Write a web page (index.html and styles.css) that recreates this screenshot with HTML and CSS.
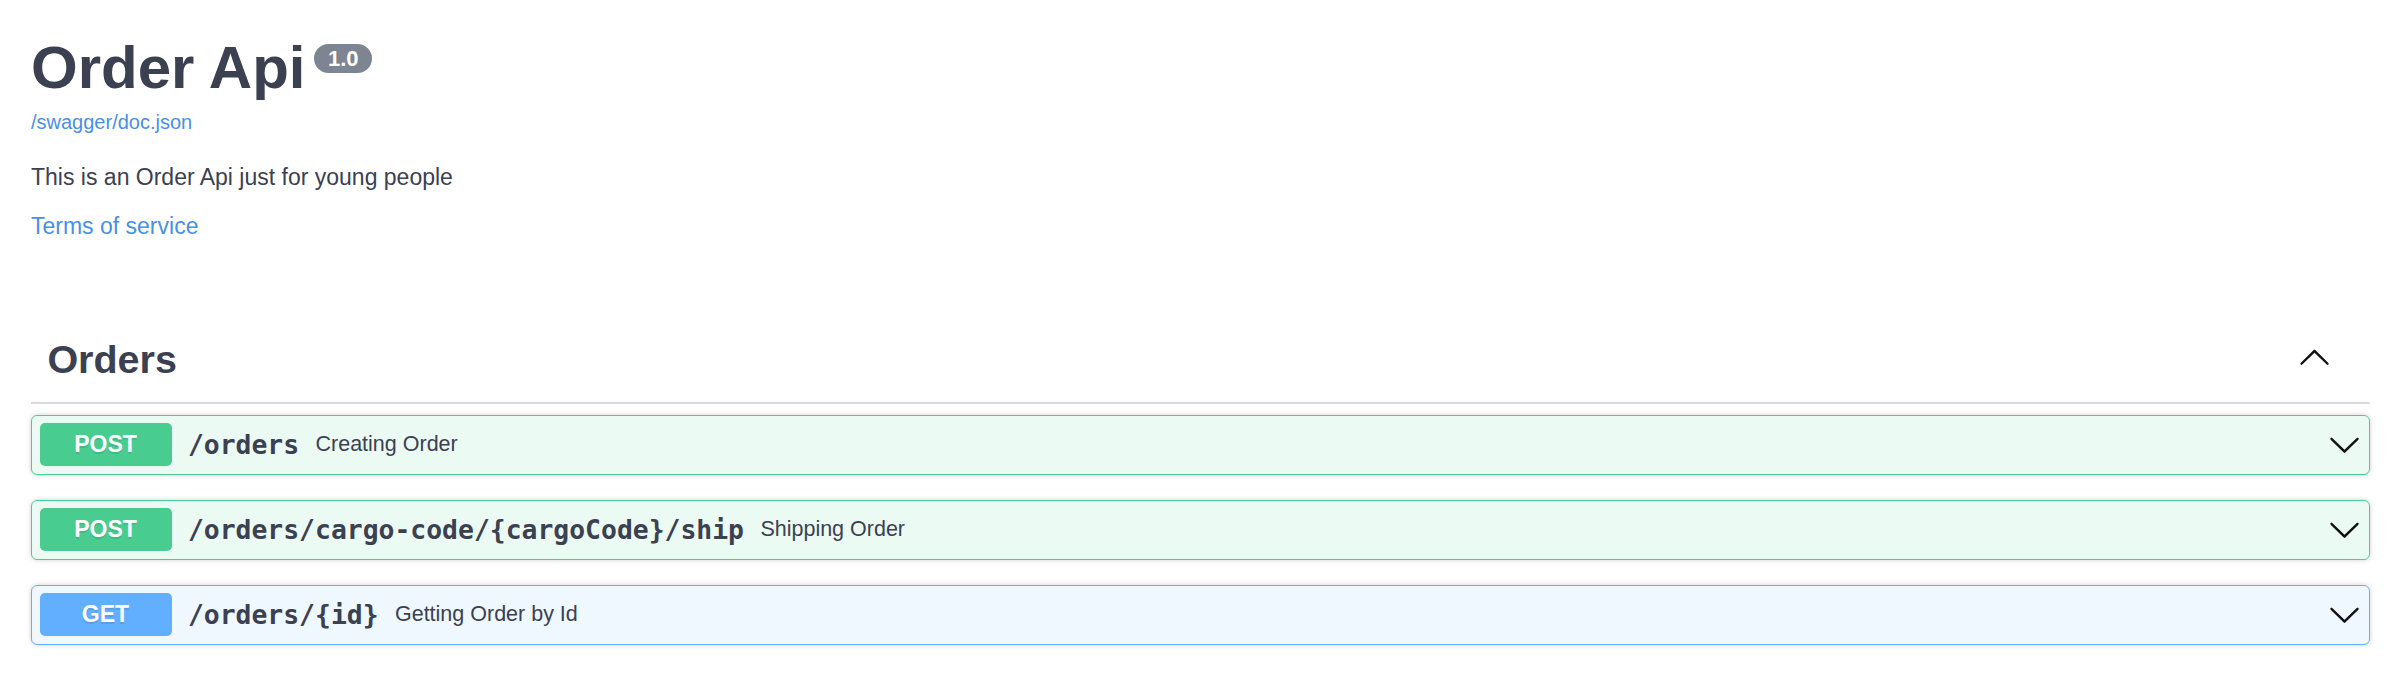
FILE: index.html
```html
<!DOCTYPE html>
<html lang="en">
<head>
<meta charset="utf-8">
<title>Order Api</title>
<link rel="stylesheet" href="styles.css">
</head>
<body>
<div class="wrapper">
  <section class="info">
    <h1 class="title"><span class="title-text">Order Api</span><small class="version"><span>1.0</span></small></h1>
    <div class="base-url"><a class="link" href="#">/swagger/doc.json</a></div>
    <p class="description">This is an Order Api just for young people</p>
    <div class="tos"><a class="link tos-link" href="#">Terms of service</a></div>
  </section>

  <section class="tag-section">
    <h3 class="opblock-tag">
      <span class="tag-name">Orders</span>
      <button class="expand" aria-label="collapse">
        <svg class="arrow" viewBox="0 0 20 20" width="33" height="33"><path d="M17.418 14.908c.272.268.709.268.979 0s.271-.701 0-.969l-7.908-7.83c-.27-.268-.707-.268-.979 0l-7.908 7.83c-.27.268-.27.701 0 .969.271.268.709.268.979 0L10 7.767l7.418 7.141z"/></svg>
      </button>
    </h3>

    <div class="opblock opblock-post">
      <div class="summary">
        <span class="method method-post">POST</span>
        <span class="path">/orders</span>
        <span class="summary-desc">Creating Order</span>
        <svg class="arrow" viewBox="0 0 20 20" width="33" height="33"><path d="M17.418 6.109c.272-.268.709-.268.979 0s.271.701 0 .969l-7.908 7.83c-.27.268-.707.268-.979 0l-7.908-7.83c-.27-.268-.27-.701 0-.969.271-.268.709-.268.979 0L10 13.25l7.418-7.141z"/></svg>
      </div>
    </div>

    <div class="opblock opblock-post">
      <div class="summary">
        <span class="method method-post">POST</span>
        <span class="path">/orders/cargo-code/{cargoCode}/ship</span>
        <span class="summary-desc">Shipping Order</span>
        <svg class="arrow" viewBox="0 0 20 20" width="33" height="33"><path d="M17.418 6.109c.272-.268.709-.268.979 0s.271.701 0 .969l-7.908 7.83c-.27.268-.707.268-.979 0l-7.908-7.83c-.27-.268-.27-.701 0-.969.271-.268.709-.268.979 0L10 13.25l7.418-7.141z"/></svg>
      </div>
    </div>

    <div class="opblock opblock-get">
      <div class="summary">
        <span class="method method-get">GET</span>
        <span class="path">/orders/{id}</span>
        <span class="summary-desc">Getting Order by Id</span>
        <svg class="arrow" viewBox="0 0 20 20" width="33" height="33"><path d="M17.418 6.109c.272-.268.709-.268.979 0s.271.701 0 .969l-7.908 7.83c-.27.268-.707.268-.979 0l-7.908-7.83c-.27-.268-.27-.701 0-.969.271-.268.709-.268.979 0L10 13.25l7.418-7.141z"/></svg>
      </div>
    </div>
  </section>
</div>
</body>
</html>
```

FILE: styles.css
```css
* { box-sizing: border-box; }

html, body {
  margin: 0;
  padding: 0;
  background: #ffffff;
}

body {
  font-family: "Liberation Sans", Arial, sans-serif;
  color: #3b4151;
}

.wrapper {
  padding: 0 30px 0 31px;
}

.info {
  padding-top: 33.7px;
}

.title {
  display: flex;
  align-items: flex-start;
  margin: 0;
  font-size: 60px;
  line-height: 68px;
  font-weight: 700;
  color: #3b4151;
}

.version {
  display: inline-block;
  margin: 10.3px 0 0 9px;
  padding: 0 13.5px;
  height: 29px;
  line-height: 29px;
  border-radius: 15px;
  background: #7d8492;
  color: #ffffff;
  font-size: 22px;
  font-weight: 700;
}

.link {
  color: #4990e2;
  text-decoration: none;
}

.base-url {
  margin-top: 9.3px;
  font-size: 20px;
  line-height: 23px;
}

.description {
  margin: 30.5px 0 0;
  font-size: 23px;
  line-height: 26px;
}

.tos {
  margin-top: 23px;
  font-size: 23px;
  line-height: 26px;
}

.tag-section {
  margin-top: 78px;
}

.opblock-tag {
  display: flex;
  align-items: center;
  margin: 0 0 10.5px;
  padding: 20px 39px 20px 16.4px;
  border-bottom: 2px solid #dadbde;
  font-size: 39.5px;
  line-height: 45px;
  font-weight: 700;
  color: #3b4151;
}

.tag-name {
  flex: 1 1 auto;
}

.expand {
  display: flex;
  padding: 0;
  margin: 0 0 6px;
  border: none;
  background: none;
}

.arrow {
  display: block;
  flex: none;
  fill: #111111;
}

.opblock {
  margin: 0 0 25px;
  border: 1.5px solid #000;
  border-radius: 6px;
  box-shadow: 0 0 5px rgba(0, 0, 0, 0.19);
}

.opblock-post {
  border-color: #49cc90;
  background: rgba(73, 204, 144, 0.1);
}

.opblock-get {
  border-color: #61affe;
  background: rgba(97, 175, 254, 0.1);
}

.summary {
  display: flex;
  align-items: center;
  padding: 7.5px 8px 7.5px 7.5px;
}

.method {
  flex: none;
  width: 132px;
  height: 43px;
  line-height: 43px;
  border-radius: 5px;
  text-align: center;
  font-size: 23px;
  font-weight: 700;
  color: #ffffff;
  text-shadow: 0 1.6px 0 rgba(0, 0, 0, 0.1);
}

.method-post { background: #49cc90; }
.method-get { background: #61affe; }

.path {
  padding: 0 16.4px;
  font-family: "DejaVu Sans Mono", "Liberation Mono", monospace;
  font-size: 26.4px;
  font-weight: 700;
  color: #3b4151;
}

.summary-desc {
  flex: 1 1 auto;
  font-size: 21.5px;
  color: #3b4151;
}
```
